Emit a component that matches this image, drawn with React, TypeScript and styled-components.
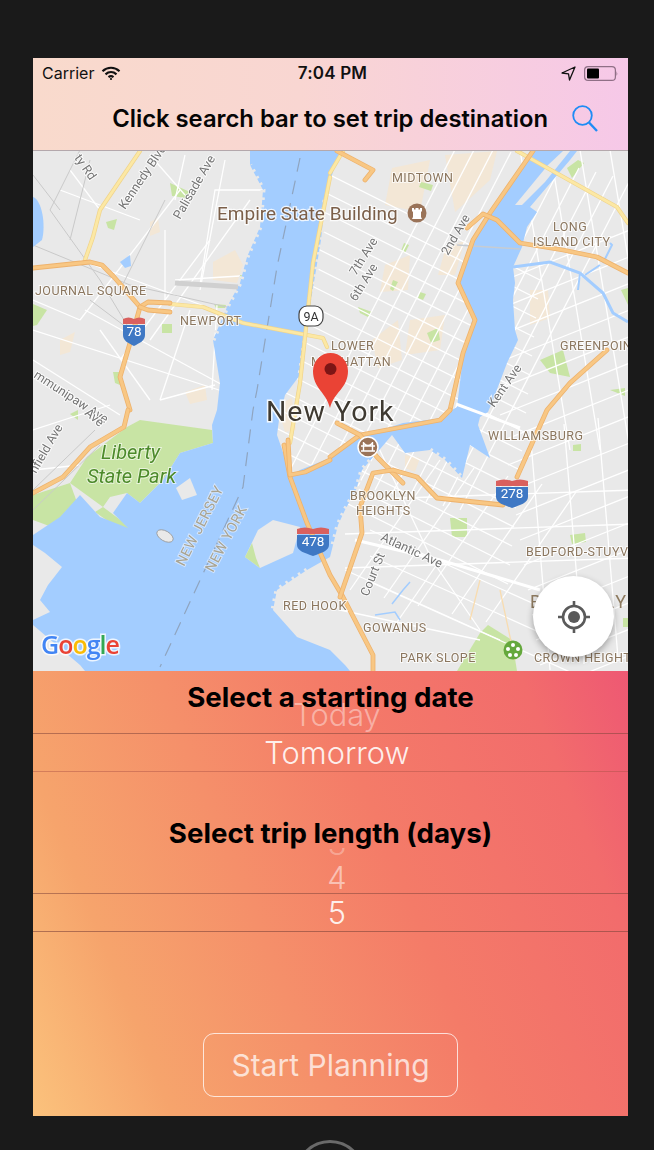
import React from "react";
import styled, { createGlobalStyle } from "styled-components";

const Global = createGlobalStyle`
  html, body { margin: 0; padding: 0; background: #1a1a1a; }
  #root { width: 654px; height: 1150px; overflow: hidden; }
`;

const Page = styled.div`
  width: 654px;
  height: 1150px;
  overflow: hidden;
  background: #1a1a1a;
  padding: 58px 26px 0 33px;
  box-sizing: border-box;
  font-family: Inter, "Liberation Sans", sans-serif;
`;
const Phone = styled.div`
  width: 595px;
  height: 1058px;
  display: flex;
  flex-direction: column;
`;
const Header = styled.header`
  height: 93px;
  box-sizing: border-box;
  border-bottom: 1px solid #b4a8ac;
  background: linear-gradient(90deg, #f9dacc 0%, #f9d6d2 45%, #f6c8e8 100%);
  display: flex;
  flex-direction: column;
`;
const StatusBar = styled.div`
  height: 30px;
  display: grid;
  grid-template-columns: 1fr auto 1fr;
  align-items: center;
  padding: 0 9px;
  color: #111;
  font-size: 16px;
`;
const StatusLeft = styled.div`
  display: flex;
  align-items: center;
  gap: 7px;
`;
const Time = styled.div`
  font-weight: 600;
  font-size: 17px;
  letter-spacing: 0.2px;
  margin-left: 4px;
`;
const StatusRight = styled.div`
  display: flex;
  align-items: center;
  justify-content: flex-end;
  gap: 8px;
  padding-right: 1px;
`;
const TitleRow = styled.div`
  flex: 1;
  display: flex;
  align-items: center;
  justify-content: flex-end;
  gap: 24px;
  padding: 0 30px 1px 0;
`;
const Title = styled.h1`
  margin: 0;
  font-size: 23.8px;
  font-weight: 600;
  color: #050505;
  white-space: nowrap;
`;
const MapArea = styled.div`
  position: relative;
  height: 520px;
  overflow: hidden;
  background: #e9e9e9;
`;
const MapSvg = styled.svg`
  display: block;
  width: 595px;
  height: 520px;
  font-family: Roboto, "Liberation Sans", sans-serif;
  filter: blur(0.45px);
`;
const Place = styled.text`
  font-size: 12.5px;
  fill: #8b765e;
  letter-spacing: 0.45px;
  stroke: rgba(255, 255, 255, 0.75);
  stroke-width: 2px;
  paint-order: stroke;
`;
const Street = styled.text`
  font-size: 12.5px;
  fill: #747474;
  stroke: rgba(255, 255, 255, 0.8);
  stroke-width: 2px;
  paint-order: stroke;
`;
const Landmark = styled.text`
  font-size: 19px;
  fill: #7b5f49;
  stroke: rgba(255, 255, 255, 0.8);
  stroke-width: 2.5px;
  paint-order: stroke;
`;
const City = styled.text`
  font-size: 28.5px;
  fill: #3f3a31;
  letter-spacing: 1px;
  stroke: rgba(255, 255, 255, 0.85);
  stroke-width: 3px;
  paint-order: stroke;
`;
const Borough = styled.text`
  font-size: 18px;
  fill: #8d7a5f;
  letter-spacing: 3.2px;
`;
const Park = styled.text`
  font-size: 20px;
  font-style: italic;
  fill: #4c8a2a;
  stroke: rgba(255, 255, 255, 0.6);
  stroke-width: 2px;
  paint-order: stroke;
`;
const WaterText = styled.text`
  font-size: 14px;
  fill: #a9a38f;
  letter-spacing: 0.5px;
  stroke: rgba(230, 240, 255, 0.7);
  stroke-width: 2px;
  paint-order: stroke;
`;
const ShieldNumber = styled.text`
  font-size: 13.5px;
  fill: #fff;
  text-anchor: middle;
`;
const RouteNumber = styled.text`
  font-size: 12.5px;
  fill: #333;
  text-anchor: middle;
`;
const GoogleMark = styled.text`
  font-family: "Open Sans", Roboto, sans-serif;
  font-size: 25px;
  font-weight: 600;
  letter-spacing: -1px;
  stroke: rgba(255, 255, 255, 0.8);
  stroke-width: 3px;
  paint-order: stroke;
`;
const LocateButton = styled.button`
  position: absolute;
  left: 500px;
  top: 425px;
  width: 81px;
  height: 81px;
  padding: 0;
  border: 0;
  border-radius: 50%;
  background: #fff;
  box-shadow: 0 3px 7px rgba(0, 0, 0, 0.32);
  display: flex;
  align-items: center;
  justify-content: center;
`;
const Panel = styled.section`
  flex: 1;
  display: flex;
  flex-direction: column;
  align-items: stretch;
  background: linear-gradient(68deg, #fbc27c 0%, #f6a46c 18%, #f47b68 60%, #f26c6c 86%, #ee5873 100%);
`;
const Heading = styled.h2<{ $top: number }>`
  position: relative;
  z-index: 1;
  margin: ${(p) => p.$top}px 0 0;
  height: 32px;
  line-height: 32px;
  font-size: 27.7px;
  font-weight: 700;
  color: #000;
  text-align: center;
  white-space: nowrap;
`;
const Wheel = styled.div<{ $top: number }>`
  margin-top: ${(p) => p.$top}px;
  padding: 0;
  overflow: hidden;
`;
const WheelRow = styled.div<{ $h: number; $fade: number; $line: number }>`
  height: ${(p) => p.$h}px;
  display: flex;
  align-items: flex-end;
  justify-content: center;
  padding-left: 13px;
  overflow: hidden;
  color: rgba(255, 255, 255, ${(p) => p.$fade});
  font-size: 30.8px;
  font-weight: 300;
  line-height: ${(p) => p.$line}px;
`;
const SelectedRow = styled.div<{ $bottom: string }>`
  height: 39px;
  box-sizing: border-box;
  display: flex;
  align-items: center;
  justify-content: center;
  padding-left: 13px;
  border-top: 1px solid rgba(130, 70, 60, 0.55);
  border-bottom: 1px solid ${(p) => p.$bottom};
  color: rgba(255, 255, 255, 0.88);
  font-size: 30.8px;
  font-weight: 300;
`;
const StartButton = styled.button`
  align-self: center;
  margin-top: 101px;
  width: 255px;
  height: 64px;
  box-sizing: border-box;
  border: 1px solid rgba(255, 255, 255, 0.75);
  border-radius: 11px;
  background: transparent;
  color: rgba(255, 255, 255, 0.72);
  font-family: inherit;
  font-size: 30px;
  font-weight: 400;
`;
const HomeButton = styled.div`
  width: 70px;
  height: 70px;
  margin: 24px 0 0 262px;
  box-sizing: border-box;
  border: 3px solid #6a6a6a;
  border-radius: 50%;
`;

const d = (pts: number[][]) => "M" + pts.map((p) => p.join(",")).join(" L");

const WATER = [[250,151],[340,151],[332,175],[325,200],[321,240],[316,270],[311,300],[305,340],[300,375],[285,395],[279,420],[277,435],[284,455],[290,476],[300,470],[330,458],[360,437],[403,423],[443,418],[452,410],[457,407],[463,357],[473,317],[460,283],[470,247],[490,213],[517,172],[530,151],[577,151],[570,160],[547,187],[530,207],[537,212],[527,227],[522,247],[513,267],[515,283],[513,300],[515,330],[518,340],[507,363],[493,400],[488,412],[480,417],[478,425],[490,458],[470,445],[462,478],[445,460],[430,450],[405,453],[392,435],[375,455],[362,470],[356,490],[345,510],[338,525],[333,545],[330,557],[307,570],[277,590],[273,610],[297,637],[330,650],[345,665],[350,671],[85,671],[80,665],[33,625],[33,620],[50,612],[40,600],[48,585],[62,567],[45,553],[33,545],[33,535],[60,517],[80,495],[100,517],[128,528],[113,513],[127,493],[140,503],[163,480],[180,453],[213,443],[212,425],[217,410],[220,383],[213,340],[227,307],[240,283],[247,257],[260,227],[263,190],[250,165]];
const GOV = [[245,557],[258,530],[273,520],[300,527],[293,553],[260,568]];
const PARKS: number[][][] = [
  [[140,420],[212,430],[213,443],[180,453],[163,480],[140,503],[127,493],[110,497],[103,507],[70,483],[87,457],[127,427]],
  [[33,495],[70,483],[78,505],[60,530],[33,520]],
  [[103,507],[130,527],[125,533],[95,512]],
  [[480,633],[457,671],[517,671],[512,640],[488,625]],
  [[540,360],[563,350],[570,377],[550,373]],
  [[450,518],[467,518],[467,537],[452,537]],
  [[570,535],[585,533],[586,542],[572,544]],
  [[170,183],[190,192],[186,198],[172,196]],
  [[106,222],[117,219],[114,230],[108,228]],
  [[162,324],[172,324],[172,333],[162,333]],
  [[240,275],[252,277],[250,281],[240,279]],
  [[33,304],[47,310],[37,325],[33,326]],
  [[214,304],[226,305],[225,308],[216,308]],
  [[113,372],[122,372],[120,385],[115,383]],
  [[421,182],[433,185],[431,191],[419,187]],
  [[404,243],[409,245],[405,253],[401,251]],
  [[393,280],[398,282],[393,291],[390,289]],
  [[358,307],[372,312],[368,317],[360,313]],
  [[427,333],[438,328],[440,340],[431,343]],
  [[420,292],[426,294],[423,300],[418,298]],
  [[567,168],[578,160],[584,163],[572,178]],
  [[621,290],[628,288],[628,305]],
  [[610,390],[625,388],[625,396]],
  [[573,445],[581,444],[581,451],[573,451]],
  [[623,618],[628,618],[628,627],[623,627]],
  [[577,535],[585,535],[585,541],[577,541]],
  [[70,414],[78,410],[78,420]],
];
const TINTS: number[][][] = [
  [[213,262],[235,250],[243,265],[237,283],[213,280]],
  [[150,222],[158,218],[160,232],[150,236]],
  [[392,168],[430,160],[420,212],[385,205]],
  [[385,265],[410,255],[408,290],[380,292]],
  [[410,320],[445,315],[440,350],[405,355]],
  [[445,155],[497,151],[490,180],[455,212]],
  [[372,340],[398,320],[402,360],[378,368]],
  [[277,405],[292,398],[296,430],[285,432]],
  [[530,290],[548,290],[550,318],[530,325]],
  [[185,392],[205,385],[207,400],[190,404]],
  [[405,455],[420,458],[415,472],[405,468]],
  [[60,340],[75,332],[70,352],[60,355]],
  [[438,275],[445,250],[465,240],[455,275]],
];
const ORANGE: number[][][] = [
  [[33,268],[90,262],[102,265],[114,277],[140,307],[130,343],[120,377],[130,410]],
  [[140,307],[148,302],[170,303]],
  [[140,307],[148,310],[170,312]],
  [[128,410],[124,427],[90,447],[63,477],[33,493]],
  [[284,445],[290,477],[307,523],[330,575],[343,597],[373,655],[373,671]],
  [[337,151],[373,170],[365,180]],
  [[533,151],[490,213],[473,240],[458,283],[475,320],[463,353],[450,410]],
  [[467,228],[483,214],[497,220],[520,243],[563,250],[597,257],[628,273]],
  [[607,350],[570,383],[547,410],[517,477]],
  [[330,457],[360,435],[440,420],[450,410]],
  [[337,423],[360,435],[377,457],[403,483]],
  [[360,507],[373,473],[393,470],[417,477],[437,498],[503,505]],
  [[360,507],[362,533],[340,597]],
  [[288,440],[290,475],[305,472],[330,460]],
];
const YELLOW: number[][][] = [
  [[140,151],[100,210],[93,237],[85,260]],
  [[330,173],[343,151]],
  [[170,304],[203,307],[243,323],[323,338],[327,347]],
  [[330,177],[313,263],[300,383],[290,443]],
  [[517,151],[617,207],[628,223]],
];
const lines = (x1: number, y1: number, dx: number, dy: number, stepX: number, stepY: number, n: number) =>
  Array.from({ length: n }, (_, i) => [[x1 + i * stepX, y1 + i * stepY], [x1 + i * stepX + dx, y1 + i * stepY + dy]]);
const GRID = [
  ...lines(290, 470, 170, -330, 17, 4, 11),
  ...lines(280, 150, 260, 130, -2, 19, 17),
  ...lines(480, 290, 150, -60, 4, 25, 17),
  ...lines(520, 150, 50, 300, 30, 0, 4),
  ...lines(530, 430, 20, 240, 34, -6, 4),
  ...lines(345, 500, 290, -10, 0, 34, 3),
  ...lines(370, 530, 200, 90, 0, 26, 3),
  ...lines(350, 590, 90, -130, 34, 8, 5),
];
const WEST = [[[210,240],[120,360]],[[250,200],[150,340]],[[180,190],[80,320]],[[140,220],[60,190]],[[33,330],[250,400]],[[33,360],[120,415]],[[85,310],[250,400]],[[80,260],[215,310]],[[165,300],[165,230]],[[175,280],[240,276]],[[200,285],[215,190],[263,190]],[[100,210],[70,170]],[[190,310],[160,400]],[[160,400],[215,385]],[[33,430],[110,405]],[[33,470],[80,465]],[[80,320],[33,300]],[[217,305],[212,390]],[[100,330],[150,400]],[[185,155],[175,200]],[[225,160],[200,290]],[[150,155],[185,195]]];
const GREY = [[[33,245],[130,285],[240,310]],[[80,150],[50,210],[100,280],[130,330]],[[165,200],[120,290]],[[33,490],[95,430]],[[33,510],[100,445]],[[90,160],[70,240]],[[130,330],[90,300]],[[33,175],[60,210]]];

const StreetLabels: [string, number, number, number][] = [
  ["ty Rd", 74, 158, 55],
  ["Kennedy Blvd", 125, 210, -56],
  ["Palisade Ave", 180, 220, -60],
  ["7th Ave", 356, 276, -58],
  ["6th Ave", 356, 302, -58],
  ["2nd Ave", 448, 256, -60],
  ["Kent Ave", 494, 408, -55],
  ["Court St", 368, 597, -68],
  ["Atlantic Ave", 380, 540, 25],
  ["mmunipaw Ave", 33, 377, 33],
  ["Ave", 84, 414, 40],
  ["nfield Ave", 36, 474, -60],
];
const PlaceLabels: [string, number, number][] = [
  ["MIDTOWN", 392, 182],
  ["LONG", 553, 231],
  ["ISLAND CITY", 533, 246],
  ["JOURNAL SQUARE", 35, 295],
  ["NEWPORT", 180, 325],
  ["LOWER", 331, 350],
  ["MANHATTAN", 311, 366],
  ["GREENPOINT", 560, 350],
  ["WILLIAMSBURG", 488, 440],
  ["BROOKLYN", 350, 500],
  ["HEIGHTS", 356, 515],
  ["BEDFORD-STUYV", 526, 556],
  ["RED HOOK", 283, 610],
  ["GOWANUS", 363, 632],
  ["PARK SLOPE", 400, 662],
  ["CROWN HEIGHT", 534, 662],
];

const Shield = ({ x, y, n, w }: { x: number; y: number; n: string; w: number }) => (
  <g transform={`translate(${x} ${y})`}>
    <path d={`M${-w},-12 q${w / 2},-3 ${w},0 q${w / 2},-3 ${w},0 v5 H${-w} Z`} fill="#d9605e" />
    <path d={`M${-w},-6 H${w} V4 C${w},10 ${w / 2},12 0,15 C${-w / 2},12 ${-w},10 ${-w},4 Z`} fill="#3f78c4" />
    <ShieldNumber y={5}>{n}</ShieldNumber>
  </g>
);

const CityMap = () => (
  <MapSvg viewBox="33 151 595 520">
    <rect x="33" y="151" width="595" height="520" fill="#e9e9e9" />
    {TINTS.map((t, i) => <path key={i} d={d(t) + "Z"} fill="#f3e7d6" />)}
    {PARKS.map((t, i) => <path key={i} d={d(t) + "Z"} fill="#c8e4a4" />)}
    <g fill="none" stroke="#fff" strokeWidth="1.3">
      {GRID.map((l, i) => <path key={i} d={d(l)} />)}
      {WEST.map((l, i) => <path key={i} d={d(l)} />)}
      <path d={d([[355,540],[440,560],[540,590]])} strokeWidth="3" />
      <path d={d([[375,440],[432,560],[480,630]])} />
      <path d={d([[345,570],[500,640]])} />
      <path d={d([[340,610],[480,640]])} />
      <path d={d([[395,625],[440,560]])} />
      <path d={d([[470,620],[480,580]])} stroke="#f8dcb0" />
      <path d={d([[500,590],[515,660]])} stroke="#f8dcb0" />
    </g>
    <g fill="none" stroke="#c9c9c9" strokeWidth="1">
      {GREY.map((l, i) => <path key={i} d={d(l)} />)}
    </g>
    <path d={d(WATER) + "Z"} fill="#a3cdff" />
    <g fill="none" stroke="#e9e9e9" strokeWidth="5" strokeDasharray="2.500 5">
      <path d={d([[325,200],[321,240],[316,270],[311,300],[305,340],[300,375]])} />
      <path d={d([[213,340],[227,307],[240,283],[247,257],[260,227],[263,190],[250,165]])} />
      <path d={d([[375,455],[362,470],[356,490],[345,510],[338,525],[333,545]])} />
      <path d={d([[430,450],[445,460],[462,478]])} />
      <path d={d([[307,570],[277,590],[273,610]])} />
    </g>
    <path d={d(GOV) + "Z"} fill="#e9e9e9" />
    <path d="M245,557 L252,543 L256,558 L260,568 Z" fill="#c8e4a4" />
    <path d="M515,205 L548,165 L563,151 L570,151 L545,182 L522,205 Z" fill="#e9e9e9" />
    <ellipse cx="165" cy="536" rx="9" ry="5" transform="rotate(30 165 536)" fill="#e9e9e9" stroke="#999" strokeWidth="0.8" />
    <path d="M176,488 L190,478 L197,495 L182,500 Z" fill="#e9e9e9" />
    <path d="M33,197 C42,200 46,225 42,240 L33,247 Z" fill="#a3cdff" />
    <path d="M120,262 L130,255 L131,266 L125,268 Z" fill="#a3cdff" />
    <path d={d([[513,267],[550,262],[580,273],[603,293],[613,313],[628,322]])} fill="none" stroke="#a3cdff" strokeWidth="3" />
    <path d={d([[580,273],[578,290]]) + d([[585,275],[600,265]]) + d([[603,263],[612,245],[610,243]])} fill="none" stroke="#a3cdff" strokeWidth="2" />
    <path d={d([[392,604],[403,590],[410,582]]) + d([[375,615],[395,612],[400,620]])} fill="none" stroke="#a3cdff" strokeWidth="1.500" />
    <path d={d([[456,404],[520,428]])} stroke="#fff" strokeWidth="3" fill="none" />
    <path d={d([[345,395],[456,404]])} stroke="#fff" strokeWidth="0" fill="none" />
    <path d={d([[457,245],[520,249]])} stroke="#c7ccd2" strokeWidth="1.500" fill="none" />
    <path d={d([[175,283],[238,287]])} stroke="#d0d0d0" strokeWidth="5" fill="none" />
    <path d={d([[300,158],[277,267],[257,390],[253,410],[243,487],[160,667]])} fill="none" stroke="#8fa4bf" strokeWidth="1.200" strokeDasharray="14 9" />
    <g fill="none" strokeLinejoin="round" strokeLinecap="round">
      {YELLOW.map((l, i) => (
        <g key={i}>
          <path d={d(l)} stroke="#f0d48c" strokeWidth="4.200" />
          <path d={d(l)} stroke="#fce8a4" strokeWidth="2.800" />
        </g>
      ))}
      {ORANGE.map((l, i) => (
        <g key={i}>
          <path d={d(l)} stroke="#eeb26c" strokeWidth="4.800" />
          <path d={d(l)} stroke="#f8c784" strokeWidth="3.200" />
        </g>
      ))}
    </g>
    {StreetLabels.map(([t, x, y, a]) => (
      <Street key={t} x={x} y={y} transform={`rotate(${a} ${x} ${y})`}>{t}</Street>
    ))}
    {PlaceLabels.map(([t, x, y]) => <Place key={t} x={x} y={y}>{t}</Place>)}
    <Landmark x="217" y="220">Empire State Building</Landmark>
    <circle cx="417" cy="213" r="9.500" fill="#9a7358" />
    <path d="M412,219 h10 l-1,-2 v-5 l1,-1 v-3 h-2 v1.500 h-1.500 v-1.500 h-3 v1.500 h-1.500 v-1.500 h-2 v3 l1,1 v5 Z" fill="#fff" />
    <City x="266" y="421">New York</City>
    <Park x="101" y="459">Liberty</Park>
    <Park x="87" y="483">State Park</Park>
    <WaterText x="184" y="567" transform="rotate(-63 184 567)">NEW JERSEY</WaterText>
    <WaterText x="213" y="573" transform="rotate(-62 213 573)">NEW YORK</WaterText>
    <Borough x="530" y="608">BROOKLYN</Borough>
    <Shield x={134} y={331} n="78" w={11} />
    <Shield x={313} y={541} n="478" w={16} />
    <Shield x={512} y={493} n="278" w={16} />
    <rect x="299" y="306" width="24" height="20" rx="8" fill="#fff" stroke="#444" strokeWidth="1.200" />
    <RouteNumber x="311" y="321">9A</RouteNumber>
    <circle cx="368" cy="447" r="10" fill="#9a7358" stroke="#fff" strokeWidth="1.500" />
    <path d="M361,451 h14 M361,446 h14 M363.500,442 v9 M372.500,442 v9 M363.500,443 q4.500,5 9,0" stroke="#fff" strokeWidth="1.400" fill="none" />
    <circle cx="513" cy="650" r="9.500" fill="#64a83c" />
    <g fill="#fff">
      <circle cx="513" cy="645" r="2" /><circle cx="518" cy="649" r="2" /><circle cx="516" cy="655" r="2" /><circle cx="510" cy="655" r="2" /><circle cx="508" cy="649" r="2" />
    </g>
    <path d="M330,408 C326,392 313,388 313,371 A17.500,18 0 0 1 348,371 C348,388 334,392 330,408 Z" fill="#ea4335" />
    <circle cx="330.500" cy="369" r="6" fill="#7d1515" />
    <GoogleMark x="41" y="654">
      <tspan fill="#4285f4">G</tspan><tspan fill="#ea4335">o</tspan><tspan fill="#fbbc05">o</tspan><tspan fill="#4285f4">g</tspan><tspan fill="#34a853">l</tspan><tspan fill="#ea4335">e</tspan>
    </GoogleMark>
  </MapSvg>
);

export default function App() {
  return (
    <Page>
      <Global />
      <Phone>
        <Header>
          <StatusBar>
            <StatusLeft>
              Carrier
              <svg width="20" height="15" viewBox="0 0 20 15" fill="none" stroke="#111" strokeWidth="2.200">
                <path d="M1.500 5.200 C6.500 0.600 13.500 0.600 18.500 5.200" />
                <path d="M4.500 8.300 C7.800 5.400 12.200 5.400 15.500 8.300" />
                <path d="M7.500 11.200 C9 10 11 10 12.500 11.200" />
                <circle cx="10" cy="13" r="1.100" fill="#111" stroke="none" />
              </svg>
            </StatusLeft>
            <Time>7:04 PM</Time>
            <StatusRight>
              <svg width="15" height="15" viewBox="0 0 15 15" fill="none" stroke="#111" strokeWidth="1.300" strokeLinejoin="round">
                <path d="M14 1 L1 7 L7.500 7.800 L8.500 14 Z" />
              </svg>
              <svg width="34" height="15" viewBox="0 0 34 15">
                <rect x="0.600" y="0.600" width="30.800" height="13.800" rx="3.500" fill="none" stroke="#8f6f86" strokeWidth="1.200" />
                <rect x="3" y="2.500" width="12" height="10" rx="1" fill="#000" />
                <path d="M32.500 5 q1.500 2.500 0 5 Z" fill="#8f6f86" />
              </svg>
            </StatusRight>
          </StatusBar>
          <TitleRow>
            <Title>Click search bar to set trip destination</Title>
            <svg width="26" height="27" viewBox="0 0 26 27" fill="none" stroke="#1e8cf5" strokeWidth="1.800">
              <circle cx="10.500" cy="10.500" r="9.300" />
              <path d="M17 17.500 L25 26" strokeWidth="2.400" />
            </svg>
          </TitleRow>
        </Header>
        <MapArea>
          <CityMap />
          <LocateButton aria-label="Locate">
            <svg width="34" height="34" viewBox="0 0 34 34" fill="none" stroke="#5a5a5a">
              <circle cx="17" cy="17" r="11" strokeWidth="2.600" />
              <circle cx="17" cy="17" r="6" fill="#5a5a5a" stroke="none" />
              <path d="M17 1 V6 M17 28 V33 M1 17 H6 M28 17 H33" strokeWidth="2.600" />
            </svg>
          </LocateButton>
        </MapArea>
        <Panel>
          <Heading $top={10}>Select a starting date</Heading>
          <Wheel $top={-13}>
            <WheelRow $h={33} $fade={0.42} $line={36}>Today</WheelRow>
            <SelectedRow $bottom="rgba(170,80,70,0.45)">Tomorrow</SelectedRow>
          </Wheel>
          <Heading $top={45}>Select trip length (days)</Heading>
          <Wheel $top={-1}>
            <WheelRow $h={14} $fade={0.3} $line={36}>3</WheelRow>
            <WheelRow $h={31} $fade={0.5} $line={30}>4</WheelRow>
            <SelectedRow $bottom="rgba(130,70,60,0.6)">5</SelectedRow>
          </Wheel>
          <StartButton>Start Planning</StartButton>
        </Panel>
      </Phone>
      <HomeButton />
    </Page>
  );
}
